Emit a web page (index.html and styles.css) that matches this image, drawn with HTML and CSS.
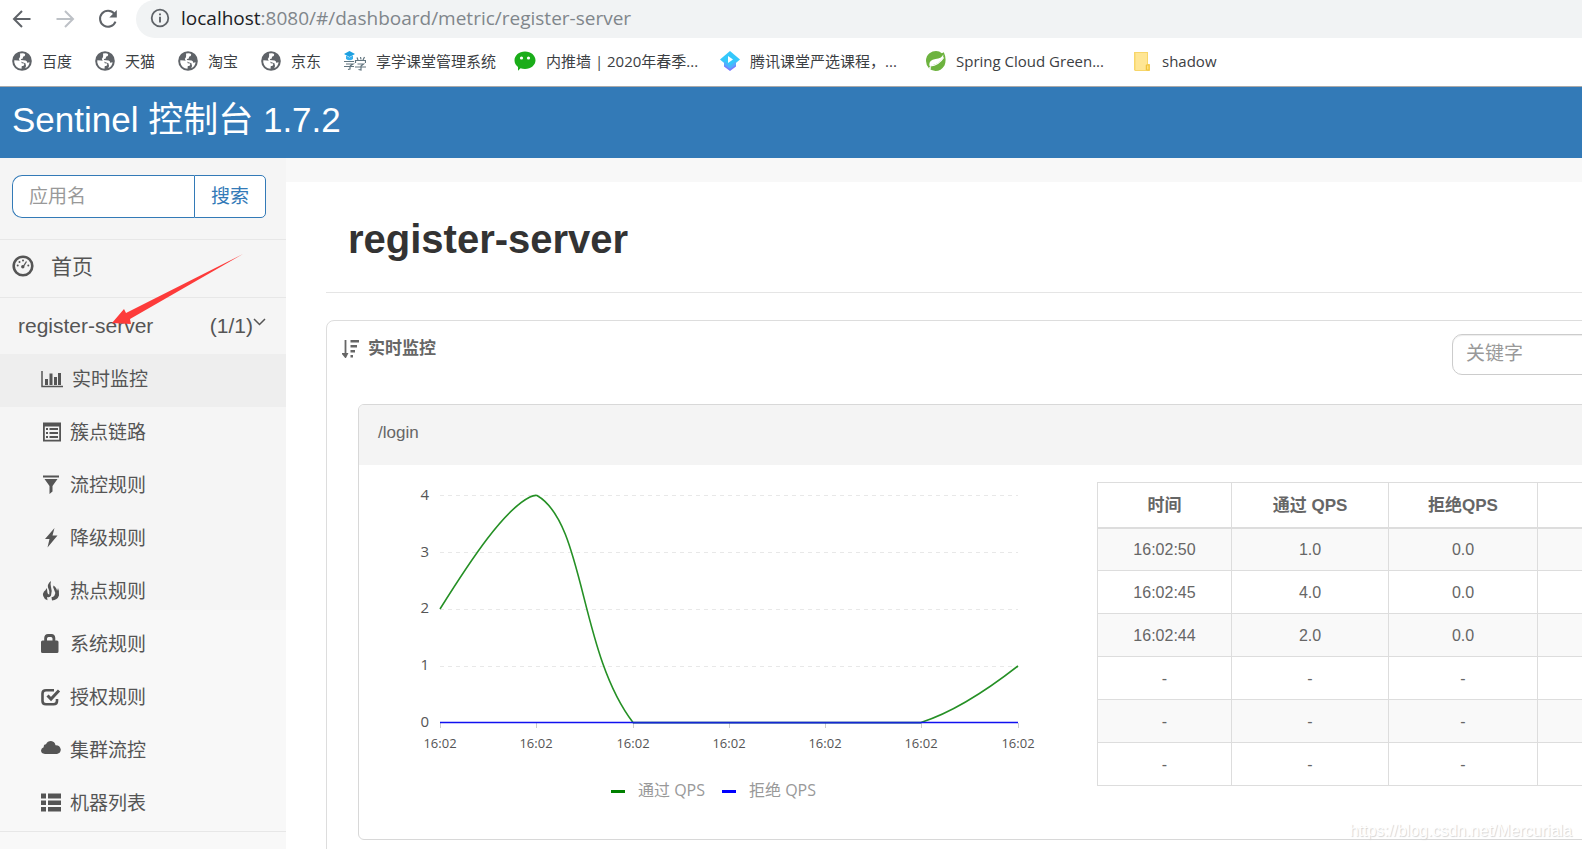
FILE: index.html
```html
<!DOCTYPE html>
<html lang="zh-CN">
<head>
<meta charset="utf-8">
<title>Sentinel 控制台</title>
<link rel="stylesheet" href="styles.css">
</head>
<body>
<svg class="defs" aria-hidden="true">
  <symbol id="globe" viewBox="0 0 20 20">
    <circle cx="10" cy="10" r="9.8" fill="#5f6368"/>
    <path d="M2.3 9.2 L6 9.4 Q9.6 9.6 9.8 12.2 L12.2 12.4 Q12.4 15.2 9.8 15 L9.5 17.8 Q3.600 17.6 2.3 11.6Z M8 2.6 Q12 1.800 13.2 3.2 Q13.4 5.6 11 5.8 L10.8 7.4 Q8.6 7.600 8.8 9 L13.6 9.4 Q15.2 9.8 15.2 11.8 L17.6 11.2 Q17 15.6 13.2 17.2 Q14.600 14.4 13.4 12.2 L9.8 11 Q6.6 9.6 6.8 7.800 Q8.6 6.6 8 2.6Z" fill="#fff"/>
  </symbol>
</svg>
<div class="browser">
  <div class="toolbar">
    <button class="nav" aria-label="后退"><svg width="20" height="20" viewBox="0 0 20 20"><path d="M18.500 10H2.500M10 2L2 10l8 8" fill="none" stroke="#5f6368" stroke-width="2"/></svg></button>
    <button class="nav" aria-label="前进"><svg width="20" height="20" viewBox="0 0 20 20"><path d="M1.500 10H17.500M10 2l8 8-8 8" fill="none" stroke="#bdc1c6" stroke-width="2"/></svg></button>
    <button class="nav" aria-label="刷新"><svg width="20" height="20" viewBox="0 0 20 20"><path d="M16.200 4.600A8 8 0 1 0 17.500 12.600" fill="none" stroke="#5f6368" stroke-width="2"/><path d="M18.800 1V8.500H11.300Z" fill="#5f6368"/></svg></button>
    <div class="address">
      <svg width="20" height="20" viewBox="0 0 20 20"><circle cx="10" cy="10" r="8.300" fill="none" stroke="#5f6368" stroke-width="1.800"/><path d="M10 8.800V14.500M10 5.500V7.300" stroke="#5f6368" stroke-width="1.900"/></svg>
      <span class="url"><b>localhost</b>:8080/#/dashboard/metric/register-server</span>
    </div>
  </div>
  <nav class="bookmarks">
    <a class="short" href="#"><svg width="20" height="20"><use href="#globe"/></svg>百度</a>
    <a class="short" href="#"><svg width="20" height="20"><use href="#globe"/></svg>天猫</a>
    <a class="short" href="#"><svg width="20" height="20"><use href="#globe"/></svg>淘宝</a>
    <a class="short" href="#"><svg width="20" height="20"><use href="#globe"/></svg>京东</a>
    <a class="medium" href="#"><svg width="22" height="20" viewBox="0 0 22 20"><path d="M0 3L5.500 0L11 3L5.500 6Z" fill="#1c9fe0"/><path d="M2 4.500V8Q5.500 10.500 9 8V4.500L5.500 6.500Z" fill="#35b0ee"/><path d="M0 10.500H10M2 13H9L6 15M0 15.500H10M6 15V18L4 18.500M13 6.500L14 9M16.500 6L17 8.500M20.500 6L19 9M11.500 12V9.500H21.500V12M13.500 13H19.500L17 15V19L14.500 18.500M11 16H22" fill="none" stroke="#62757f" stroke-width="1.200"/></svg>享学课堂管理系统</a>
    <a class="wide" href="#"><svg width="22" height="20" viewBox="0 0 22 20"><path d="M11 .5C17 .5 21.500 4.500 21.500 9.300S17 18 11 18Q8.500 18 6.500 17.300L4 19.700V15.900Q.5 13.300.5 9.300C.5 4.500 5 .5 11 .5Z" fill="#1aad19"/><circle cx="7.500" cy="7" r="1.600" fill="#fff"/><circle cx="14.500" cy="7" r="1.600" fill="#fff"/></svg>内推墙 | 2020年春季...</a>
    <a class="wide" href="#"><svg width="20" height="20" viewBox="0 0 20 20"><path d="M4 12L10 17L16 12V15.500L10 20L4 15.500Z" fill="#7a7cff"/><path d="M10 0L20 8.500L10 17L0 8.500Z" fill="#35c8fb"/><path d="M4 10V14L10 18L16 14V10L10 15Z" fill="#54aefc"/><path d="M8 5L13 8.500L8 12Z" fill="#fff"/></svg>腾讯课堂严选课程，...</a>
    <a class="wide" href="#"><svg width="20" height="20" viewBox="0 0 20 20"><path d="M17.800 1.300Q21 8 18.500 14.500Q15 20 9.500 20Q5.500 20 3 17.300Q0 14 0 10Q0 5 3.500 2.300Q6.500 0 10 0Q13.500 0 15.800 2.200Q17 2 17.800 1.300Z" fill="#6db33f"/><path d="M17.300 3.500Q15.500 7.500 9.500 8Q3 9 3.300 14Q3.700 16 4.600 16.200Q12 15.500 15.500 11.500Q18 8 17.300 3.500Z" fill="#fff"/><path d="M5 14.500Q13 13.500 18.300 5.500Q19.500 15 12 16.500Q8 17.500 4.500 16.500Z" fill="#6db33f"/><path d="M4.500 14.800Q12.500 14.500 17.700 6.500" fill="none" stroke="#fff" stroke-width="1.200"/><circle cx="4" cy="17" r="1" fill="#fff"/></svg>Spring Cloud Green...</a>
    <a href="#"><svg width="20" height="20" viewBox="0 0 20 20"><path d="M2 1H16V13H18V20H3L2 19Z" fill="#f7d66a"/><path d="M3.500 2H15V13L13.500 14V19H3.500Z" fill="#ffe694"/><path d="M14.500 14H17V19H14.500Z" fill="#ffe07a" stroke="#f0c23b"/></svg>shadow</a>
  </nav>
</div>

<header class="topbar"><h2 class="brand">Sentinel 控制台 1.7.2</h2></header>

<div class="layout">
  <aside class="sidebar">
    <form class="search">
      <input class="search-input" type="text" placeholder="应用名" aria-label="应用名">
      <button class="search-btn" type="button">搜索</button>
    </form>
    <a class="home" href="#">
      <svg width="22" height="22" viewBox="0 0 22 22"><circle cx="11" cy="11" r="9.300" fill="none" stroke="#555" stroke-width="2.600"/><g fill="#555"><circle cx="5.700" cy="10.500" r="1"/><circle cx="7.500" cy="7" r="1"/><circle cx="11" cy="5.600" r="1"/><circle cx="16.300" cy="10.500" r="1"/><circle cx="10.800" cy="11.800" r="1.700"/></g><path d="M11 12L14.500 6.500" stroke="#555" stroke-width="1.300"/></svg>
      首页</a>
    <a class="app" href="#"><span>register-server</span><span class="count">(1/1)<svg width="13" height="24" viewBox="0 0 13 24"><path d="M1 5L6.500 10.500L12 5" fill="none" stroke="#555" stroke-width="1.500"/></svg></span></a>
    <ul class="menu">
      <li><a class="active" href="#"><svg width="22" height="20" viewBox="0 0 22 20"><path d="M1 2V17.500H22" fill="none" stroke="#555" stroke-width="1.500"/><path d="M4 10h3v6H4zM8.500 4.500h3V16h-3zM13 8h3v8h-3zM17 4h3v12h-3z" fill="#555"/></svg>实时监控</a></li>
      <li><a href="#"><svg width="20" height="20" viewBox="0 0 20 20"><path d="M2 .5H20V19.500H2ZM3.800 4.500V17.700H18.200V4.500Z" fill="#555" fill-rule="evenodd"/><path d="M5 6h2v2H5zM5 10h2v2H5zM5 14h2v2H5zM8.500 6H17v2H8.500zM8.500 10H17v2H8.500zM8.500 14H17v2H8.500z" fill="#555"/></svg>簇点链路</a></li>
      <li><a href="#"><svg width="20" height="20" viewBox="0 0 20 20"><path d="M2 .5H18V2.500H2ZM3.500 4H16.500L11.500 11V16.500L8.500 19V11Z" fill="#555"/></svg>流控规则</a></li>
      <li><a href="#"><svg width="20" height="20" viewBox="0 0 20 20"><path d="M13.500 0L4 11H8.500L6.500 19.500L16.500 7.500H11.500Z" fill="#555"/></svg>降级规则</a></li>
      <li><a href="#"><svg width="20" height="20" viewBox="0 0 20 20"><path d="M10 0Q6 3 7 6.500Q9 10 8.300 13.500Q6.500 13.500 6.300 10.500Q6.300 8 5.500 7Q5 9 3 10.500Q1.500 12.500 2.200 15Q3 18 6.500 19.300L6 16Q9 17 10 14.500Q11.500 10 10 6Q9 3.500 10 0ZM12.500 4.500Q11.500 6 13 8.500Q15 11.500 13.500 14.500Q12.500 16 10.500 16.200L11 19.500Q16.500 19 18 14.500Q18.500 10 17 7Q16.500 9 16 10Q16 7 12.500 4.500Z" fill="#555"/></svg>热点规则</a></li>
      <li><a href="#"><svg width="20" height="20" viewBox="0 0 20 20"><path d="M0 8Q0 6.500 1.500 6.500H3.200V4Q3.500 0 7 0H10.500Q14 0 14.300 4V6.500H16Q17.500 6.500 17.500 8V17.500Q17.500 19 16 19H1.500Q0 19 0 17.500ZM6 6.500H11.500V4.500Q11.300 3 10 3H7.500Q6.200 3 6 4.500Z" fill="#555" fill-rule="evenodd"/></svg>系统规则</a></li>
      <li><a href="#"><svg width="20" height="20" viewBox="0 0 20 20"><path d="M13 3.200H5Q1.500 3.200 1.500 6.500V14Q1.500 17.300 5 17.300H12.500Q16 17.300 16 14V12" fill="none" stroke="#555" stroke-width="2.600"/><path d="M6.500 8.500L10 12L18 3.500" fill="none" stroke="#555" stroke-width="3"/></svg>授权规则</a></li>
      <li><a href="#"><svg width="20" height="20" viewBox="0 0 20 20"><path d="M4 14Q0 13.500 0 10.500Q.2 8 2.700 7.300Q2.500 4.500 5 4.300Q6.500 1 10 1Q13.800 1.500 14.500 5.200Q19 5 19.800 9.500Q19.800 13 16 14Z" fill="#555"/></svg>集群流控</a></li>
      <li><a href="#"><svg width="20" height="20" viewBox="0 0 20 20"><path d="M0 .5h5v5H0zM7 .5h13v5H7zM0 7.500h5v4.500H0zM7 7.500h13v4.500H7zM0 14h5v4.500H0zM7 14h13v4.500H7z" fill="#555"/></svg>机器列表</a></li>
    </ul>
    <svg class="arrow" width="134" height="74" viewBox="0 0 134 74"><path d="M1 70L13 56L15 60L132 1L19 66L20 71Z" fill="#fd3b3a"/></svg>
  </aside>

  <main class="main">
    <div class="content">
      <h1 class="page-title">register-server</h1>
      <section class="panel">
        <div class="panel-head">
          <h3 class="panel-title"><svg width="17" height="18" viewBox="0 0 17 18"><path d="M3.500 0V15M1 14L3.500 17L5 14Z" stroke="#666" stroke-width="1.800" fill="#666"/><path d="M8.500 0H17V2.500H8.500zM8.500 5H15V7.500H8.500zM8.500 10H13V12.500H8.500zM8.500 15H11V17.500H8.500z" fill="#666"/></svg>实时监控</h3>
          <input class="keyword" type="text" placeholder="关键字" aria-label="关键字">
        </div>
        <article class="card">
          <div class="card-head">/login</div>
          <div class="card-body">
            <svg class="chart" width="738" height="374" viewBox="359 465 738 374" role="img" aria-label="QPS">
              <g stroke="#e8e8e8" stroke-dasharray="4 4" fill="none"><path d="M440 495.500H1018M440 552.500H1018M440 609.500H1018M440 666.500H1018"/></g>
              <path d="M440.500 723v5M536.500 723v5M633.500 723v5M729.500 723v5M825.500 723v5M921.500 723v5M1018.500 723v5" stroke="#ccc"/>
              <path d="M440 609C472 558 504 510 530 497Q534 495 537 495.500C585 523 579 652 633 722.500H921C954 712 986 691 1018 666" fill="none" stroke="#259025" stroke-width="1.600"/>
              <path d="M440 722.500H1018" stroke="#1010f0" stroke-width="1.600"/>
              <path d="M633 723H921" stroke="#1a3fb8" stroke-width="1"/>
              <g class="ylab"><text x="429" y="500">4</text><text x="429" y="557">3</text><text x="429" y="613">2</text><text x="429" y="670">1</text><text x="429" y="727">0</text></g>
              <g class="xlab"><text x="440" y="748">16:02</text><text x="536" y="748">16:02</text><text x="633" y="748">16:02</text><text x="729" y="748">16:02</text><text x="825" y="748">16:02</text><text x="921" y="748">16:02</text><text x="1018" y="748">16:02</text></g>
              <path d="M611 791.500H625" stroke="#008000" stroke-width="3"/><path d="M722 791.500H736" stroke="#00f" stroke-width="3"/>
              <g class="legend"><text x="638" y="796">通过 QPS</text><text x="749" y="796">拒绝 QPS</text></g>
            </svg>
            <table class="metrics">
              <colgroup><col class="c-time"><col class="c-pass"><col class="c-block"><col></colgroup>
              <thead><tr><th>时间</th><th>通过 QPS</th><th>拒绝QPS</th><th></th></tr></thead>
              <tbody>
                <tr><td>16:02:50</td><td>1.0</td><td>0.0</td><td></td></tr>
                <tr><td>16:02:45</td><td>4.0</td><td>0.0</td><td></td></tr>
                <tr><td>16:02:44</td><td>2.0</td><td>0.0</td><td></td></tr>
                <tr><td>-</td><td>-</td><td>-</td><td></td></tr>
                <tr><td>-</td><td>-</td><td>-</td><td></td></tr>
                <tr><td>-</td><td>-</td><td>-</td><td></td></tr>
              </tbody>
            </table>
          </div>
        </article>
      </section>
    </div>
  </main>
</div>
<div class="watermark">https://blog.csdn.net/Mercuriala</div>
</body>
</html>
```
FILE: styles.css
```css
* { box-sizing: border-box; }
body {
  margin: 0;
  height: 100vh;
  overflow: hidden;
  display: flex;
  flex-direction: column;
  background: #fff;
  color: #666;
  font: 16px/24px "Liberation Sans", "Noto Sans CJK SC", sans-serif;
}
a { color: inherit; text-decoration: none; }
svg { flex: none; display: block; }
.defs { position: absolute; width: 0; height: 0; }

.browser {
  flex: none;
  border-bottom: 1px solid #aaa;
  font-family: "Open Sans", "Noto Sans CJK SC", sans-serif;
}
.toolbar { display: flex; height: 38px; padding-left: 12px; gap: 23px; }
.nav { padding: 0; border: 0; background: none; width: 20px; }
.address {
  flex: 1;
  display: flex;
  align-items: center;
  gap: 11px;
  margin-left: -5px;
  padding: 0 0 2px 14px;
  background: #f1f3f4;
  border-radius: 19px 0 0 19px;
}
.url { font-size: 19px; color: #80868b; white-space: nowrap; }
.url b { font-weight: 400; color: #202124; }
.bookmarks { display: flex; height: 48px; padding: 0 0 2px 12px; align-items: center; }
.bookmarks a { display: flex; align-items: center; gap: 10px; font-size: 15px; color: #3c4043; white-space: nowrap; }
.bookmarks .short { width: 83px; }
.bookmarks .medium { width: 170px; }
.bookmarks .wide { width: 206px; }

.topbar { flex: none; height: 71px; padding: 13px 12px; background: #337ab7; }
.brand { margin: 0; font-size: 35px; line-height: 40px; font-weight: 400; color: #fff; }

.layout { flex: 1; display: flex; min-height: 0; }
.sidebar { position: relative; flex: none; width: 286px; color: #555; background: linear-gradient(#f5f5f5 452px, #f8f8f8 452px); }
.search { display: flex; padding: 17px 20px 21px 12px; }
.search-input {
  width: 182px; height: 43px; padding: 0 16px;
  border: 1px solid #337ab7; border-right: 0; border-radius: 10px 0 0 10px;
  background: #fff; font: inherit; font-size: 19px; outline: 0;
}
.search-btn {
  width: 72px; height: 43px; padding: 1px 0 0;
  border: 1px solid #337ab7; border-radius: 0 5px 5px 0;
  background: #fff; color: #337ab7; font: inherit; font-size: 19px;
}
::placeholder { color: #999; opacity: 1; }
.home { display: flex; align-items: center; gap: 17px; height: 58px; padding: 0 12px 3px; font-size: 21px; border-top: 1px solid #e7e7e7; }
.home svg { margin-bottom: 2px; }
.app { display: flex; justify-content: space-between; align-items: center; height: 57px; padding: 0 20px 0 18px; font-size: 21px; border-top: 1px solid #e7e7e7; }
.count { display: flex; }
.menu { margin: 0; padding: 0; list-style: none; border-bottom: 1px solid #e7e7e7; }
.menu a { display: flex; align-items: center; gap: 9px; height: 53px; padding: 0 0 2px 41px; font-size: 19px; }
.menu svg { margin-bottom: 2px; }
.menu .active { background: #eee; }
.arrow { position: absolute; left: 111px; top: 95px; }

.main { flex: 1; min-width: 0; overflow: hidden; border-top: 24px solid #f8f8f8; }
.content { width: calc(100% + 160px); padding: 33px 40px 0; }
.page-title { margin: 0; padding: 0 22px 29px; font-size: 40px; line-height: 48px; color: #333; border-bottom: 1px solid #e5e5e5; }
.panel { margin-top: 27px; padding: 13px 31px 32px; border: 1px solid #ddd; border-radius: 8px; }
.panel-head { display: flex; justify-content: space-between; align-items: flex-start; margin: 0 -16px 29px; }
.panel-title { display: flex; align-items: center; gap: 9px; margin: 3px 0 0; font-size: 17px; line-height: 24px; }
.keyword {
  width: 234px; height: 41px; padding: 0 13px 2px;
  border: 1px solid #ccc; border-radius: 10px;
  box-shadow: inset 0 1px 1px rgba(0, 0, 0, .075);
  font: inherit; font-size: 19px; outline: 0;
}
.card { border: 1px solid #d8d8d8; border-radius: 6px; overflow: hidden; }
.card-head { height: 60px; padding: 16px 19px; font-size: 17px; line-height: 24px; background: #f4f4f4; }
.card-body { display: flex; align-items: flex-start; }
.chart { font-family: "Open Sans", "Noto Sans CJK SC", sans-serif; fill: #555; }
.ylab { font-size: 15px; text-anchor: end; }
.xlab { font-size: 13px; text-anchor: middle; }
.legend { font-size: 16px; fill: #999; }
.metrics { flex: 1; margin: 17px 17px 0 0; table-layout: fixed; border-collapse: collapse; text-align: center; }
.metrics th, .metrics td { padding: 2px 0 0; border: 1px solid #ddd; }
.metrics th { height: 45px; font-size: 17px; border-bottom-width: 2px; }
.metrics td { height: 43px; }
.metrics tbody tr:nth-child(odd) { background: #f9f9f9; }
.c-time { width: 134px; }
.c-pass { width: 157px; }
.c-block { width: 149px; }

.watermark { position: absolute; right: 10px; bottom: 6px; color: #fff; text-shadow: 1px 1px 1px #d4d4d4; }
```
